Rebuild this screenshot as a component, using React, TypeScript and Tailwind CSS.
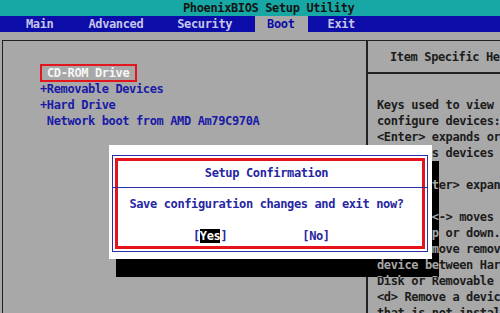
import type { ReactNode } from "react";

const helpLines = [
  "Keys used to view or",
  "configure devices:",
  "<Enter> expands or",
  "collapses devices with",
  "a + or -",
  "<Ctrl+Enter> expands",
  "all",
  "<+> and <-> moves the",
  "device up or down.",
  "<n> May move removable",
  "device between Hard",
  "Disk or Removable",
  "<d> Remove a device",
  "that is not installed.",
];

const bootItems = [
  { label: "+Removable Devices" },
  { label: "+Hard Drive" },
  { label: " Network boot from AMD Am79C970A" },
];

function HelpLines({ className = "" }: { className?: string }) {
  return (
    <div className={`whitespace-pre ${className}`}>
      {helpLines.map((line) => (
        <div key={line} className="h-[16px]">
          {line}
        </div>
      ))}
    </div>
  );
}

function MenuTab({ children, active, className = "" }: { children: ReactNode; active?: boolean; className?: string }) {
  return (
    <span className={`${active ? "bg-[#a8a8a8] pl-[12px] pr-[13px] text-[#0c0ca8]" : ""} ${className}`}>
      {children}
    </span>
  );
}

function ConfirmDialog() {
  return (
    <div className="absolute left-[109px] top-[145px] h-[132px] w-[331px]">
      {/* shadow: cells keep their text, drawn gray on black */}
      <div className="absolute left-[323px] top-[16px] h-[98px] w-[7px] overflow-hidden bg-black">
        <HelpLines className="absolute left-[-55px] top-[-64px] text-[#a8a8a8]" />
      </div>
      <div className="absolute left-[7px] top-[114px] h-[18px] w-[323px] overflow-hidden bg-black">
        <HelpLines className="absolute left-[261px] top-[-162px] text-[#a8a8a8]" />
      </div>

      <div className="h-[114px] w-[323px] bg-white pb-[7px] pl-[3px] pr-[4px] pt-[10px]">
        <div className="relative h-full border border-[#2c2ca4]">
          <div className="absolute inset-x-0 top-[31px] z-10 h-px bg-[#2c2ca4]" />
          <div className="m-[2px] flex h-[calc(100%-4px)] flex-col border-[3px] border-[#e5141c] text-[#2626a2]">
            <div className="h-[24px] pr-[7px] text-center leading-[24px]">Setup Confirmation</div>
            <div className="mt-[11px] pr-[7px] text-center">Save configuration changes and exit now?</div>
            <div className="mt-[16px] flex">
              <span className="ml-[75px]">
                [<span className="bg-black text-white">Yes</span>]
              </span>
              <span className="ml-[75px]">[No]</span>
            </div>
          </div>
        </div>
      </div>
    </div>
  );
}

export default function App() {
  return (
    <div className="relative h-[313px] w-[500px] overflow-hidden bg-[#a8a8a8] font-[DejaVu_Sans_Mono,Liberation_Mono,monospace] text-[12px] font-bold leading-[16px] tracking-[-0.37px]">
      <div className="h-[16px] whitespace-pre bg-[#17a8a5] pl-[183px] text-[#141414]">PhoenixBIOS Setup Utility</div>

      <nav className="flex h-[16px] whitespace-pre bg-[#0c0ca8] text-[#c6c6e8]">
        <MenuTab className="ml-[26px]">Main</MenuTab>
        <MenuTab className="ml-[35px]">Advanced</MenuTab>
        <MenuTab className="ml-[34px]">Security</MenuTab>
        <MenuTab className="ml-[23px]" active>
          Boot
        </MenuTab>
        <MenuTab className="ml-[20px]">Exit</MenuTab>
      </nav>

      <div className="pl-[2px] pt-[8px]">
        <div className="flex h-[273px] border-l border-t border-[#222]">
          <div className="w-[363px] shrink-0 whitespace-pre pl-[37px] pt-[24px] text-[#1a1aa6]">
            <div className="-my-px h-[18px] w-[97px] border-2 border-[#e3161d] pl-[5px] leading-[14px] text-[#f6f6f6]">
              CD-ROM Drive
            </div>
            {bootItems.map((item) => (
              <div key={item.label} className="h-[16px]">
                {item.label}
              </div>
            ))}
          </div>

          <div className="min-w-0 flex-1 border-l-2 border-[#222] text-[#1c1c1c]">
            <div className="h-[33px] whitespace-nowrap border-b-2 border-[#222] pl-[22px] pt-[8px]">Item Specific Help</div>
            <HelpLines className="pl-[9px] pt-[23px]" />
          </div>
        </div>
      </div>

      <ConfirmDialog />
    </div>
  );
}
